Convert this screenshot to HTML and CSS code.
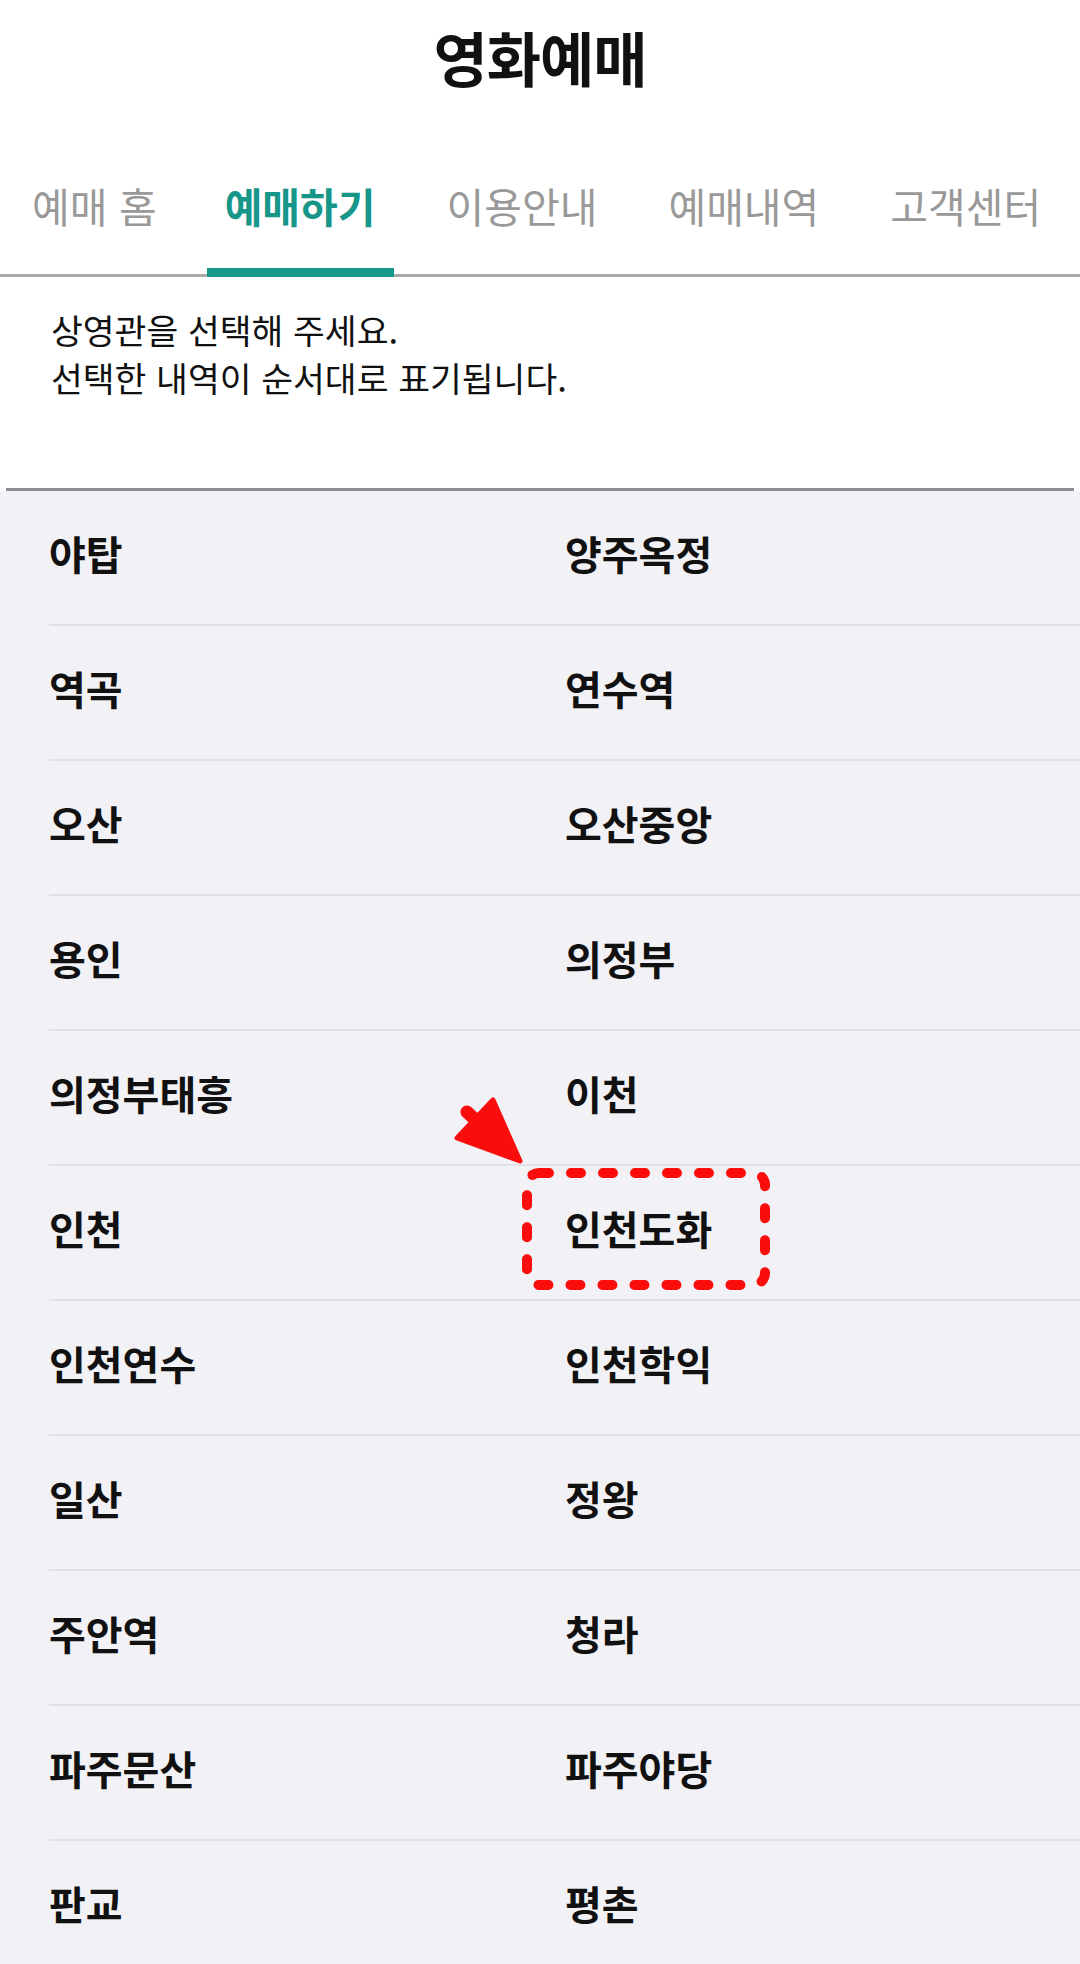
FILE: index.html
```html
<!DOCTYPE html>
<html lang="ko">
<head>
<meta charset="utf-8">
<title>영화예매</title>
<link rel="stylesheet" href="styles.css">
</head>
<body>
<div class="page">
  <header class="header"><h1 class="title">영화예매</h1></header>
  <nav class="tabs">
    <a class="tab first">예매 홈</a>
    <a class="tab active">예매하기</a>
    <a class="tab">이용안내</a>
    <a class="tab">예매내역</a>
    <a class="tab">고객센터</a>
  </nav>
  <section class="notice">
    <p>상영관을 선택해 주세요.</p>
    <p>선택한 내역이 순서대로 표기됩니다.</p>
  </section>
  <div class="divider"></div>
  <ul class="list">
    <li class="row"><span class="cell">야탑</span><span class="cell">양주옥정</span></li>
    <li class="row"><span class="cell">역곡</span><span class="cell">연수역</span></li>
    <li class="row"><span class="cell">오산</span><span class="cell">오산중앙</span></li>
    <li class="row"><span class="cell">용인</span><span class="cell">의정부</span></li>
    <li class="row"><span class="cell">의정부태흥</span><span class="cell">이천</span></li>
    <li class="row"><span class="cell">인천</span><span class="cell">인천도화</span></li>
    <li class="row"><span class="cell">인천연수</span><span class="cell">인천학익</span></li>
    <li class="row"><span class="cell">일산</span><span class="cell">정왕</span></li>
    <li class="row"><span class="cell">주안역</span><span class="cell">청라</span></li>
    <li class="row"><span class="cell">파주문산</span><span class="cell">파주야당</span></li>
    <li class="row"><span class="cell">판교</span><span class="cell">평촌</span></li>
  </ul>
  <svg class="annot" width="1080" height="1964" viewBox="0 0 1080 1964" xmlns="http://www.w3.org/2000/svg">
    <rect x="527" y="1173" width="238" height="112" rx="12" ry="12" fill="none" stroke="#fa0d0d" stroke-width="10" stroke-linecap="round" stroke-dasharray="10 22"/>
    <polygon points="520,1161 457,1138 493,1100" fill="#fa0d0d" stroke="#fa0d0d" stroke-width="5" stroke-linejoin="round"/>
    <line x1="467" y1="1112" x2="482" y2="1126" stroke="#fa0d0d" stroke-width="13" stroke-linecap="round"/>
  </svg>
</div>
</body>
</html>
```
FILE: styles.css
```css
* { box-sizing: border-box; }
html, body { margin: 0; padding: 0; }
body {
  background: #f2f2f6;
  font-family: "Noto Sans CJK KR", "Noto Sans", sans-serif;
  color: #111;
}
.page {
  position: relative;
  width: 1080px;
  height: 1964px;
  overflow: hidden;
}
.header {
  height: 122px;
  padding-bottom: 10px;
  background: #fff;
  display: flex;
  align-items: center;
  justify-content: center;
}
.title {
  margin: 0;
  font-size: 59px;
  font-weight: 700;
  letter-spacing: -1px;
  color: #111;
}
.tabs {
  height: 155px;
  background: #fff;
  border-bottom: 3px solid #a9a9a9;
  display: flex;
  gap: 35px;
  padding-left: 14px;
}
.tab {
  position: relative;
  height: 152px;
  padding: 14px 18px 0;
  display: flex;
  align-items: center;
  font-size: 41px;
  color: #999;
  white-space: nowrap;
}
.tab.first { margin-right: -3px; }
.tab.active {
  color: #17968a;
  font-weight: 700;
}
.tab.active::after {
  content: "";
  position: absolute;
  left: 0;
  right: 0;
  bottom: -3px;
  height: 9px;
  background: #17968a;
}
.notice {
  background: #fff;
  padding: 28px 0 87px 51px;
  font-size: 34.6px;
  line-height: 48px;
}
.notice p { margin: 0; }
.divider {
  height: 3px;
  background: #8e8e8e;
  margin: 0 6px;
  box-shadow: -6px 0 0 #fff, 6px 0 0 #fff;
}
.list {
  list-style: none;
  margin: 0;
  padding: 0 0 0 49px;
}
.row {
  height: 135px;
  padding-bottom: 10px;
  border-bottom: 2px solid #e1e1e5;
  display: flex;
  align-items: center;
  font-size: 40px;
  font-weight: 700;
  color: #111;
}
.cell:first-child { width: 516px; }
.annot {
  position: absolute;
  left: 0;
  top: 0;
  pointer-events: none;
}
```
